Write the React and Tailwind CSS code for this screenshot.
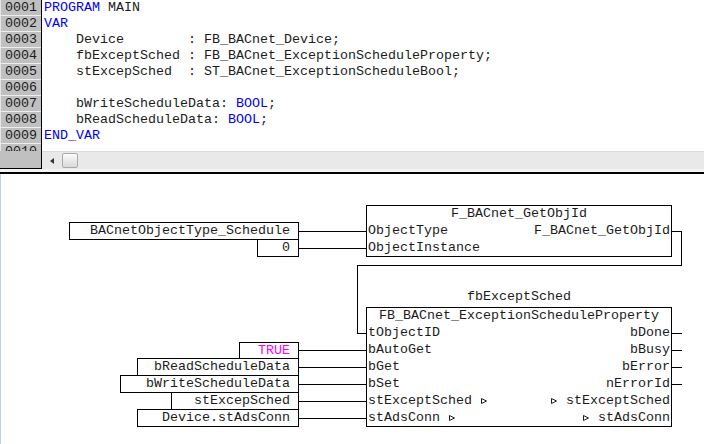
import React from "react";

const mono = { fontFamily: '"Liberation Mono", "Courier New", monospace' };

const K = ({ children }) => <span className="text-[#0000ff]">{children}</span>;

const lines = [
  <><K>PROGRAM</K> MAIN</>,
  <K>VAR</K>,
  <>{"    Device        : FB_BACnet_Device;"}</>,
  <>{"    fbExceptSched : FB_BACnet_ExceptionScheduleProperty;"}</>,
  <>{"    stExcepSched  : ST_BACnet_ExceptionScheduleBool;"}</>,
  <>{""}</>,
  <>{"    bWriteScheduleData: "}<K>BOOL</K>;</>,
  <>{"    bReadScheduleData: "}<K>BOOL</K>;</>,
  <K>END_VAR</K>,
  <>{""}</>,
];

function Tri({ className = "" }) {
  return (
    <svg width="8" height="8" viewBox="0 0 8 8" className={"inline-block " + className}>
      <path d="M1.5 1.5 L6.5 4 L1.5 6.5 Z" fill="none" stroke="#1c1c1c" strokeWidth="1" />
    </svg>
  );
}

function InBox({ left, top, w, h, children, cls = "" }) {
  return (
    <div
      className={"absolute border border-black bg-white flex items-center justify-end pr-[8px] leading-[16px] whitespace-pre " + cls}
      style={{ left, top, width: w, height: h }}
    >
      {children}
    </div>
  );
}

export default function App() {
  return (
    <div className="w-[704px] h-[444px] overflow-hidden bg-white text-[13.33px] text-[#1c1c1c]" style={mono}>
      {/* editor */}
      <div className="h-[151px] overflow-hidden flex">
        <div className="w-[42px] shrink-0 bg-[#c0c0c0] border-r border-black">
          {lines.map((_, i) => (
            <div
              key={i}
              className="h-[16px] leading-[15px] pl-[4px] border-l border-b border-l-[#e6e6e6] border-b-[#eeeeee]"
            >
              {String(i + 1).padStart(4, "0")}
            </div>
          ))}
        </div>
        <div className="flex-1 pl-[2px]">
          {lines.map((l, i) => (
            <div key={i} className="h-[16px] leading-[16px] whitespace-pre">
              {l}
            </div>
          ))}
        </div>
      </div>
      {/* scrollbar */}
      <div className="flex h-[18px]">
        <div className="w-[42px] shrink-0 bg-[#c0c0c0] border-b border-r border-black" />
        <div className="flex-1 bg-[#e9e9e9] border-t border-[#dadada] flex items-center">
          <svg width="18" height="16" viewBox="0 0 18 16" className="ml-[2px]">
            <path d="M6 8 L10 5 L10 11 Z" fill="#333" />
          </svg>
          <div className="w-[16px] h-[15px] rounded-[2px] border border-[#a9a9a9] bg-gradient-to-b from-[#fbfbfb] to-[#d9d9d9]" />
        </div>
      </div>
      <div className="h-[3px] bg-[#f4f4f4]" />
      <div className="h-[2px] bg-black" />
      {/* diagram */}
      <div className="relative h-[270px] border-l border-[#b7d3ef]">
        <svg className="absolute left-0 top-0 pointer-events-none" width="704" height="270" shapeRendering="crispEdges">
          <g stroke="#000" strokeWidth="1" fill="none">
            <path d="M298 57.5 H365" />
            <path d="M298 74.5 H365" />
            <path d="M671 57.5 H680.5 V91.5 H356.5 V159.5 H365" />
            <path d="M298 176.5 H365" />
            <path d="M298 193.5 H365" />
            <path d="M298 210.5 H365" />
            <path d="M298 227.5 H365" />
            <path d="M298 244.5 H365" />
            <path d="M671 159.5 H681" />
            <path d="M671 176.5 H681" />
            <path d="M671 193.5 H681" />
            <path d="M671 210.5 H681" />
          </g>
        </svg>

        {/* inputs for GetObjId */}
        <InBox left={68} top={48} w={230} h={18}>BACnetObjectType_Schedule</InBox>
        <InBox left={256} top={65} w={42} h={18}>0</InBox>

        {/* F_BACnet_GetObjId */}
        <div className="absolute border border-black bg-white flex flex-col" style={{ left: 365, top: 31, width: 306, height: 52 }}>
          <div className="h-[16px] leading-[16px] text-center">F_BACnet_GetObjId</div>
          <div className="h-[17px] leading-[17px] flex justify-between px-[1px]">
            <span>ObjectType</span>
            <span>F_BACnet_GetObjId</span>
          </div>
          <div className="h-[17px] leading-[17px] px-[1px]">ObjectInstance</div>
        </div>

        {/* instance label */}
        <div className="absolute text-center leading-[16px]" style={{ left: 365, top: 115, width: 306 }}>
          fbExceptSched
        </div>

        {/* FB_BACnet_ExceptionScheduleProperty */}
        <div className="absolute border border-black bg-white flex flex-col" style={{ left: 365, top: 133, width: 306, height: 120 }}>
          <div className="h-[16px] leading-[16px] text-center">FB_BACnet_ExceptionScheduleProperty</div>
          {[
            ["tObjectID", "bDone"],
            ["bAutoGet", "bBusy"],
            ["bGet", "bError"],
            ["bSet", "nErrorId"],
          ].map(([a, b]) => (
            <div key={a} className="h-[17px] leading-[17px] flex justify-between px-[1px]">
              <span>{a}</span>
              <span>{b}</span>
            </div>
          ))}
          <div className="h-[17px] leading-[17px] flex justify-between items-center px-[1px] whitespace-pre">
            <span className="flex items-center">stExceptSched <Tri /></span>
            <span className="flex items-center"><Tri /> stExceptSched</span>
          </div>
          <div className="h-[17px] leading-[17px] flex justify-between items-center px-[1px] whitespace-pre">
            <span className="flex items-center">stAdsConn <Tri /></span>
            <span className="flex items-center"><Tri /> stAdsConn</span>
          </div>
        </div>

        {/* inputs for FB */}
        <InBox left={238} top={168} w={60} h={17} cls="text-[#ff00ff]">TRUE</InBox>
        <InBox left={136} top={184} w={162} h={18}>bReadScheduleData</InBox>
        <InBox left={119} top={201} w={179} h={18}>bWriteScheduleData</InBox>
        <InBox left={170} top={218} w={128} h={18}>stExcepSched</InBox>
        <InBox left={136} top={235} w={162} h={18}>Device.stAdsConn</InBox>
      </div>
    </div>
  );
}
